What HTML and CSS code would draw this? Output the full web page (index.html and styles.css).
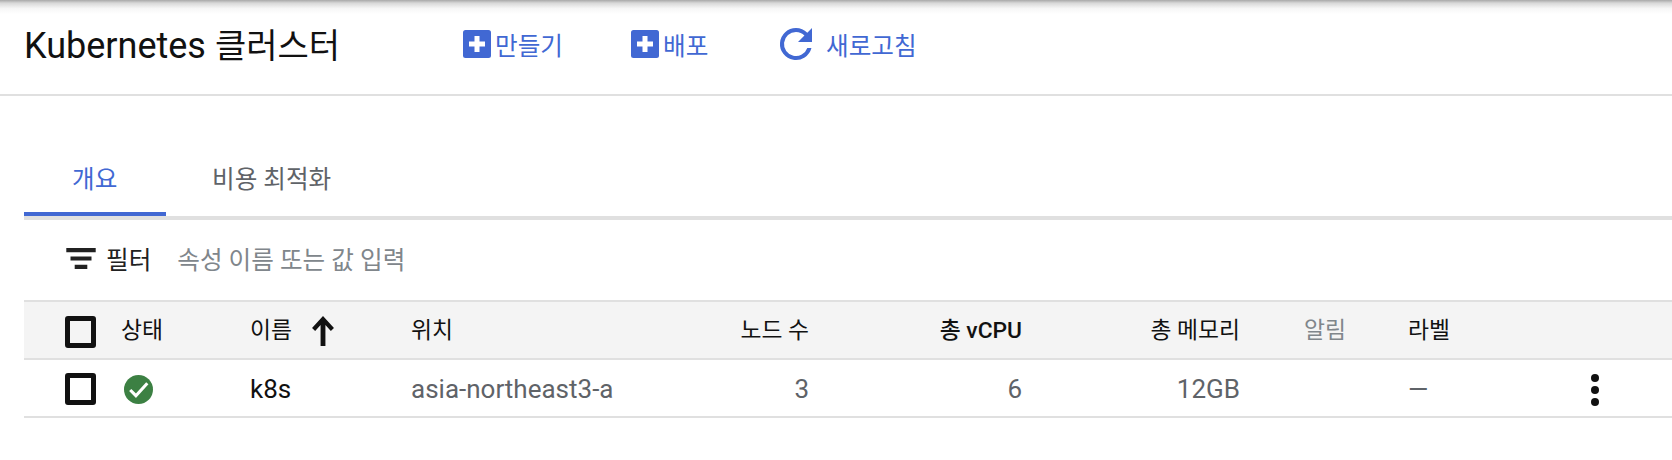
FILE: index.html
```html
<!DOCTYPE html>
<html lang="ko">

<head>
  <title>Kubernetes 클러스터</title>
  <link rel="stylesheet" href="styles.css">
</head>

<body>
  <div class="top-shadow"></div>
  <header class="toolbar">
    <h1 class="page-title">Kubernetes <span class="title-ko">클러스터</span></h1>
    <a class="action action-create">
      <svg class="plus-icon" viewBox="0 0 28 28"><rect width="28" height="28" rx="2.5" fill="#4168d3"/><path d="M11.5 6h5v5.500h5.500v5h-5.500v5.500h-5v-5.500h-5.500v-5h5.500z" fill="#fff"/></svg>
      <span>만들기</span>
    </a>
    <a class="action action-deploy">
      <svg class="plus-icon" viewBox="0 0 28 28"><rect width="28" height="28" rx="2.5" fill="#4168d3"/><path d="M11.5 6h5v5.500h5.500v5h-5.500v5.500h-5v-5.500h-5.500v-5h5.500z" fill="#fff"/></svg>
      <span>배포</span>
    </a>
    <a class="action action-refresh">
      <svg class="refresh-icon" viewBox="0 0 24 24"><path d="M17.650 6.350A7.960 7.960 0 0 0 12 4a8 8 0 1 0 7.730 10h-2.080A6 6 0 1 1 12 6c1.660 0 3.140.69 4.220 1.780L13 11h7V4z" fill="#4168d3"/></svg>
      <span>새로고침</span>
    </a>
  </header>

  <nav class="tabs">
    <a class="tab tab-active">개요</a>
    <a class="tab">비용 최적화</a>
  </nav>

  <div class="filter-bar">
    <svg class="filter-icon" viewBox="0 0 28 20"><path d="M0 0h28v4H0zM4 8h20v4H4zM8 16h12v4H8z" fill="#212121"/></svg>
    <span class="filter-label">필터</span>
    <span class="filter-hint">속성 이름 또는 값 입력</span>
  </div>

  <div class="table">
    <div class="row row-head">
      <div class="cell"><span class="checkbox"></span></div>
      <div class="cell">상태</div>
      <div class="cell">이름
        <svg class="sort-icon" viewBox="0 0 20 26"><path d="M10 0 .5 10.500l2.700 2.500 4.700-5.200V26h4.200V7.800l4.700 5.200 2.700-2.500z" fill="#111"/></svg>
      </div>
      <div class="cell">위치</div>
      <div class="cell num">노드 수</div>
      <div class="cell num strong">총 vCPU</div>
      <div class="cell num">총 메모리</div>
      <div class="cell muted alert-cell">알림</div>
      <div class="cell">라벨</div>
      <div class="cell"></div>
    </div>
    <div class="row row-body">
      <div class="cell"><span class="checkbox"></span></div>
      <div class="cell">
        <svg class="status-icon" viewBox="0 0 28 28"><circle cx="14" cy="14" r="14" fill="#3c8043"/><path d="M6 14.500l5.500 5.500L22.500 8" fill="none" stroke="#fff" stroke-width="3"/></svg>
      </div>
      <div class="cell name">k8s</div>
      <div class="cell value">asia-northeast3-a</div>
      <div class="cell num value">3</div>
      <div class="cell num value">6</div>
      <div class="cell num value">12GB</div>
      <div class="cell"></div>
      <div class="cell value">—</div>
      <div class="cell menu-cell">
        <span class="dots"><i></i><i></i><i></i></span>
      </div>
    </div>
  </div>
</body>

</html>
```

FILE: styles.css
```css
* {
  box-sizing: border-box;
}

body {
  margin: 0;
  height: 460px;
  overflow: hidden;
  background: #fff;
  font-family: Roboto, "Noto Sans CJK KR", sans-serif;
  color: #111;
}

.top-shadow {
  height: 14px;
  margin-bottom: -14px;
  background: linear-gradient(#a8a8a8, #d8d8d8 22%, #f6f6f6 60%, #fff);
}

.toolbar {
  display: flex;
  align-items: center;
  height: 96px;
  padding: 0 0 6px 24px;
  border-bottom: 2px solid #e0e0e0;
}

.page-title {
  width: 439px;
  margin: -2px 0 0;
  font-size: 36px;
  font-weight: 400;
  color: #111;
}

.title-ko {
  font-size: 34px;
}

.action {
  display: flex;
  align-items: center;
  font-size: 24.6px;
  color: #4168d3;
}

.action-create {
  width: 168px;
}

.action-deploy {
  width: 141px;
}

.plus-icon {
  width: 28px;
  height: 28px;
  margin-right: 4px;
}

.refresh-icon {
  width: 48px;
  height: 48px;
  margin-right: 6px;
}

.tabs {
  display: flex;
  height: 124px;
  margin: 0 0 0 24px;
  padding-top: 53px;
  border-bottom: 4px solid #e0e0e0;
}

.tab {
  height: 67px;
  padding: 13px 46px 0;
  font-size: 24.6px;
  line-height: 36px;
  color: #5f6368;
}

.tab-active {
  width: 142px;
  padding-left: 48px;
  color: #4168d3;
  border-bottom: 4px solid #4168d3;
}

.filter-bar {
  display: flex;
  align-items: center;
  height: 80px;
  padding: 0 0 4px 66px;
  font-size: 24.6px;
}

.filter-icon {
  width: 30px;
  height: 21px;
  margin-right: 10px;
}

.filter-label {
  margin-right: 26px;
  color: #212121;
}

.filter-hint {
  color: #80868b;
}

.table {
  margin-left: 24px;
  border-top: 2px solid #e0e0e0;
}

.row {
  display: grid;
  grid-template-columns: 97px 129px 161px 229px 169px 213px 218px 168px 150px 1fr;
  align-items: center;
  height: 58px;
  border-bottom: 2px solid #e0e0e0;
  font-size: 22.8px;
}

.row-head {
  background: #f4f4f4;
}

.row-head .cell {
  margin-top: -4px;
}

.row-head .checkbox {
  margin-top: 8px;
}

.row-body {
  padding-top: 2px;
}

.cell {
  display: flex;
  align-items: center;
}

.num {
  justify-content: flex-end;
}

.strong {
  font-weight: 500;
}

.muted {
  color: #80868b;
}

.alert-cell {
  padding-left: 64px;
}

.value {
  font-size: 26px;
  color: #5f6368;
}

.name {
  font-size: 26px;
}

.checkbox {
  display: block;
  width: 31px;
  height: 32px;
  margin-left: 41px;
  border: 5px solid #111;
  border-radius: 3px;
}

.sort-icon {
  width: 24px;
  height: 30px;
  margin: 6px 0 0 19px;
}

.status-icon {
  width: 29px;
  height: 29px;
  margin-left: 3px;
}

.menu-cell {
  padding-left: 33px;
}

.dots {
  display: flex;
  flex-direction: column;
  gap: 4px;
  margin-top: 2px;
}

.dots i {
  display: block;
  width: 8px;
  height: 8px;
  border-radius: 50%;
  background: #111;
}
```
